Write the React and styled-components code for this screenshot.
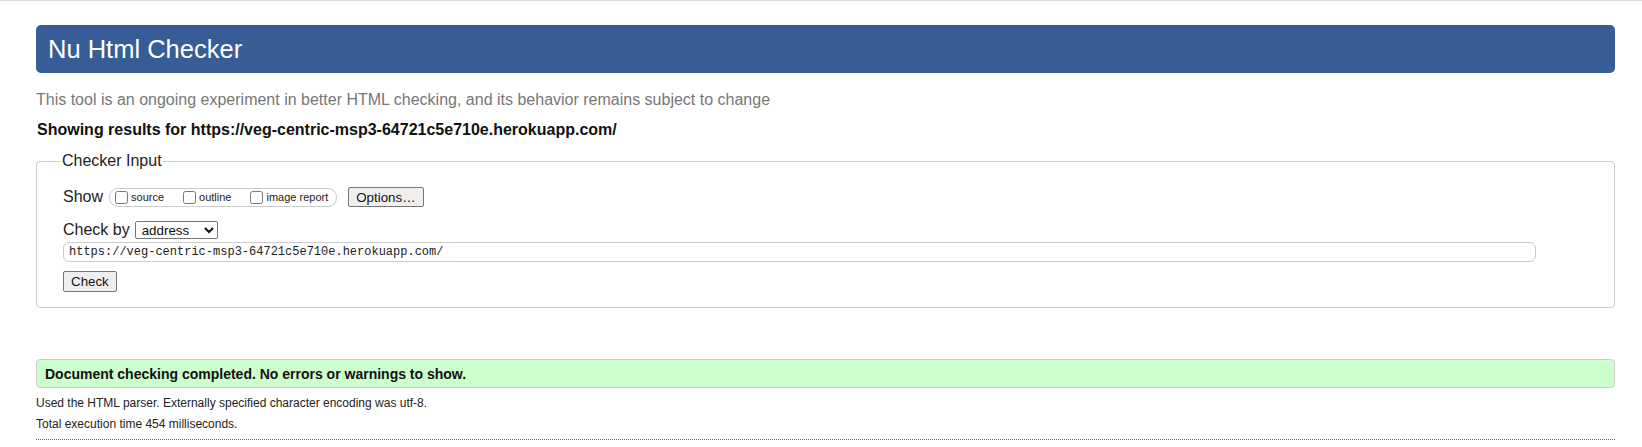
import React from "react";
import styled, { createGlobalStyle } from "styled-components";

const GlobalStyle = createGlobalStyle`
  html, body {
    margin: 0;
    padding: 0;
    background: #ffffff;
  }
  body {
    font-family: "Liberation Sans", Arial, sans-serif;
    color: #111111;
  }
  * { box-sizing: border-box; }
`;

const TopRule = styled.div`
  height: 1px;
  background: #dcdcdc;
`;

const Page = styled.main`
  padding: 0 27px 0 36px;
`;

const Header = styled.h1`
  margin: 24px 0 0;
  height: 48px;
  display: flex;
  align-items: center;
  padding-left: 12px;
  background: #365d95;
  border-radius: 5px;
  color: #ffffff;
  font-size: 25.5px;
  font-weight: normal;
`;

const Tagline = styled.p`
  margin: 17px 0 0;
  font-size: 16px;
  line-height: 20px;
  color: #777777;
`;

const ResultsFor = styled.p`
  margin: 10px 0 0;
  padding-left: 1px;
  font-size: 16px;
  line-height: 20px;
  font-weight: bold;
  color: #111111;
`;

const InputSet = styled.fieldset`
  margin: 12px 0 0;
  padding: 17px 78px 15px 26px;
  border: 1px solid #cccccc;
  border-radius: 4px;
  min-inline-size: 0;
`;

const Legend = styled.legend`
  margin-left: -2px;
  padding: 0 1px;
  font-size: 16px;
  line-height: 18px;
  color: #222222;
`;

const Row = styled.div`
  display: flex;
  align-items: center;
  height: ${(p) => p.$h}px;
  margin-top: ${(p) => p.$mt || 0}px;
`;

const RowLabel = styled.span`
  font-size: 16px;
  color: #222222;
  margin-right: ${(p) => p.$gap}px;
`;

const ShowGroup = styled.span`
  display: inline-flex;
  align-items: center;
  height: 19px;
  padding: 0 8px 0 1px;
  border: 1px solid #cccccc;
  border-radius: 9px;
  margin-right: 11px;
`;

const ShowItem = styled.label`
  display: inline-flex;
  align-items: center;
  font-size: 11px;
  color: #222222;
  margin-right: ${(p) => (p.$last ? 0 : 15)}px;
`;

const Box = styled.input`
  width: 13px;
  height: 13px;
  margin: 0 3px 0 4px;
`;

const Button = styled.button`
  height: ${(p) => p.$h}px;
  padding: 0 7px;
  font-family: "Liberation Sans", Arial, sans-serif;
  font-size: 13.33px;
  color: #111111;
  background: #efefef;
  border: 1px solid #767676;
  border-radius: 2px;
`;

const Select = styled.select`
  width: 83px;
  height: 18px;
  padding: 0 0 0 2px;
  font-family: "Liberation Sans", Arial, sans-serif;
  font-size: 13.33px;
  color: #111111;
  background: #ffffff;
  border: 1px solid #767676;
  border-radius: 2px;
`;

const UrlField = styled.input`
  display: block;
  width: 100%;
  height: 20px;
  margin-top: 3px;
  padding: 0 5px;
  font-family: "Liberation Mono", "DejaVu Sans Mono", monospace;
  font-size: 12px;
  color: #222222;
  border: 1px solid #cccccc;
  border-radius: 6px;
  outline: none;
`;

const CheckRow = styled.div`
  margin-top: 9px;
  display: flex;
`;

const Success = styled.div`
  margin-top: 51px;
  height: 29px;
  display: flex;
  align-items: center;
  padding-left: 8px;
  background: #ccffcc;
  border: 1px solid #cccccc;
  border-radius: 4px;
  font-size: 14px;
  font-weight: bold;
  color: #111111;
`;

const Detail = styled.p`
  margin: ${(p) => p.$mt}px 0 0;
  font-size: 12px;
  line-height: 14px;
  color: #222222;
`;

const DottedRule = styled.hr`
  margin: 8px 0 0;
  border: 0;
  border-top: 1px dotted #666666;
  height: 0;
`;

export default function App() {
  const url = "https://veg-centric-msp3-64721c5e710e.herokuapp.com/";
  return (
    <>
      <GlobalStyle />
      <TopRule />
      <Page>
        <Header>Nu Html Checker</Header>
        <Tagline>
          This tool is an ongoing experiment in better HTML checking, and its
          behavior remains subject to change
        </Tagline>
        <ResultsFor>Showing results for {url}</ResultsFor>
        <InputSet>
          <Legend>Checker Input</Legend>
          <Row $h={20}>
            <RowLabel $gap={6}>Show</RowLabel>
            <ShowGroup>
              <ShowItem>
                <Box type="checkbox" />
                source
              </ShowItem>
              <ShowItem>
                <Box type="checkbox" />
                outline
              </ShowItem>
              <ShowItem $last>
                <Box type="checkbox" />
                image report
              </ShowItem>
            </ShowGroup>
            <Button type="button" $h={20}>
              Options…
            </Button>
          </Row>
          <Row $h={18} $mt={14}>
            <RowLabel $gap={5}>Check by</RowLabel>
            <Select defaultValue="address">
              <option value="address">address</option>
              <option value="file">file upload</option>
              <option value="text">text input</option>
            </Select>
          </Row>
          <UrlField type="url" defaultValue={url} />
          <CheckRow>
            <Button type="button" $h={21}>
              Check
            </Button>
          </CheckRow>
        </InputSet>
        <Success>
          Document checking completed. No errors or warnings to show.
        </Success>
        <Detail $mt={8}>
          Used the HTML parser. Externally specified character encoding was
          utf-8.
        </Detail>
        <Detail $mt={7}>Total execution time 454 milliseconds.</Detail>
        <DottedRule />
      </Page>
    </>
  );
}
